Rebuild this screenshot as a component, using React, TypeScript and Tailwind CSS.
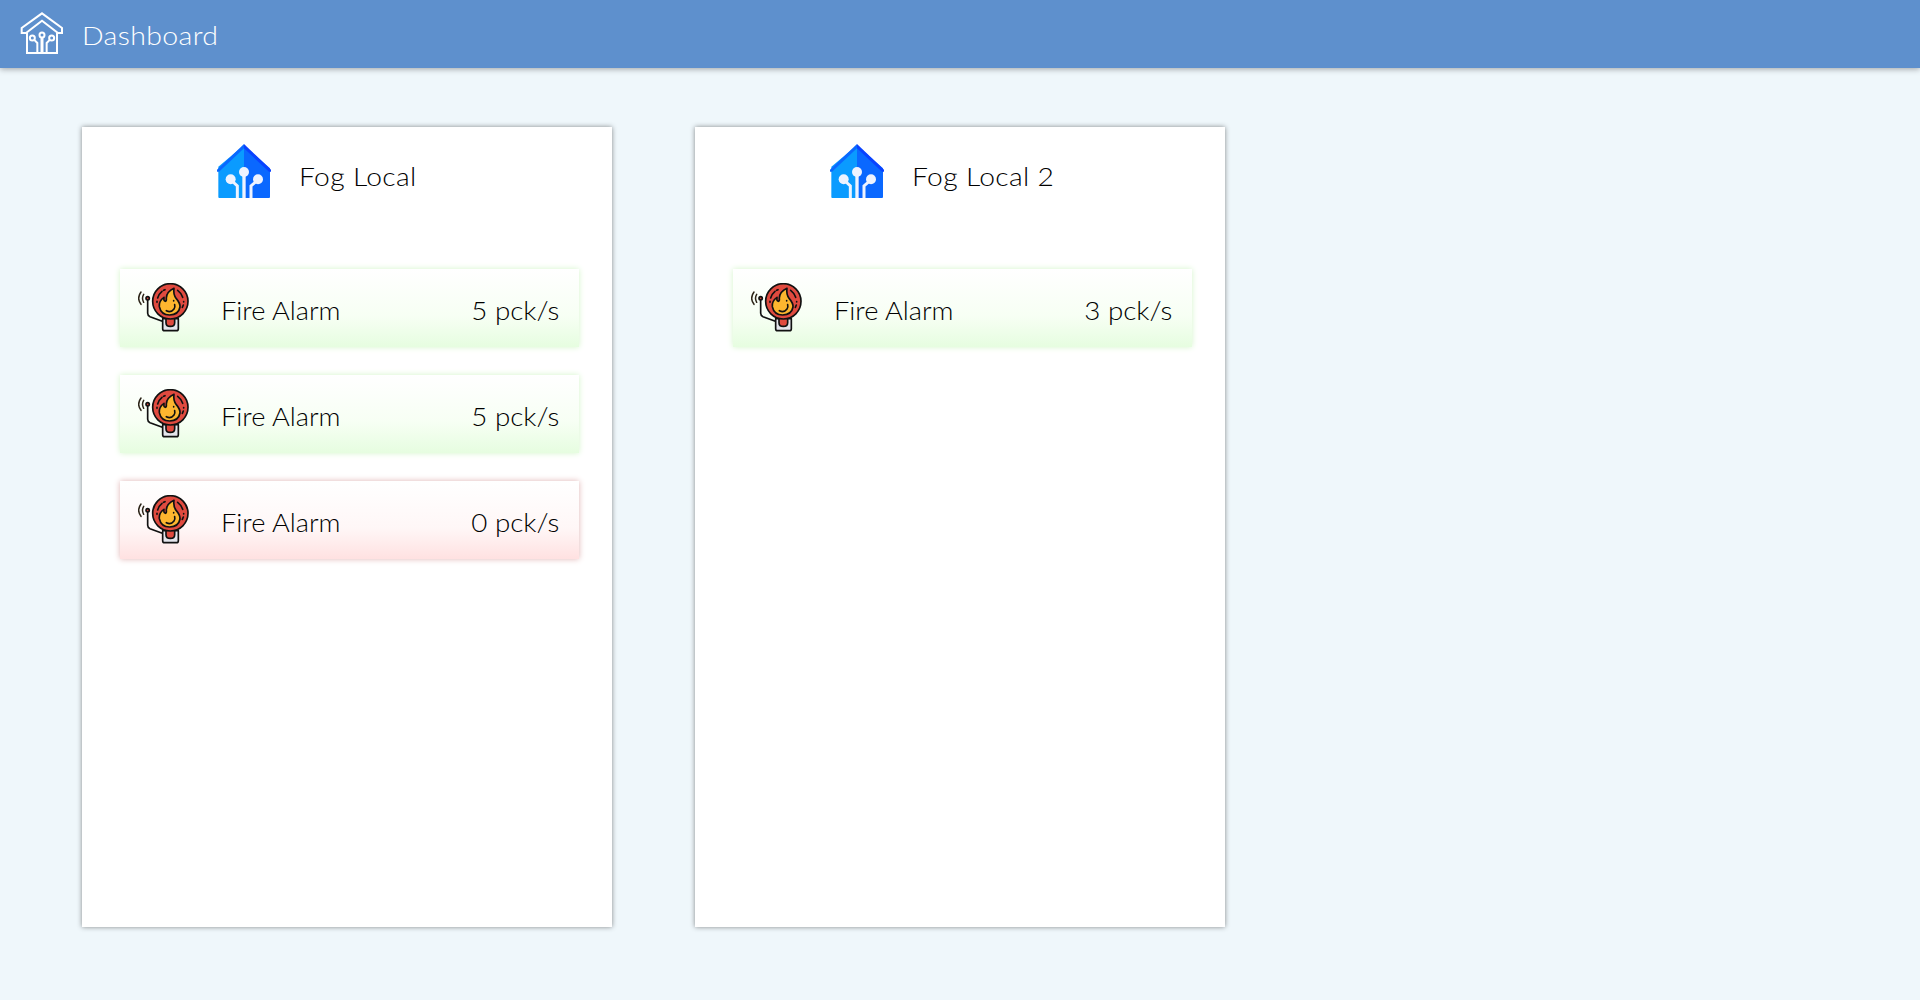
type Sensor = { name: string; rate: number };
type Fog = { name: string; sensors: Sensor[] };

const fogs: Fog[] = [
  {
    name: "Fog Local",
    sensors: [
      { name: "Fire Alarm", rate: 5 },
      { name: "Fire Alarm", rate: 5 },
      { name: "Fire Alarm", rate: 0 },
    ],
  },
  { name: "Fog Local 2", sensors: [{ name: "Fire Alarm", rate: 3 }] },
];

function HeaderLogo() {
  return (
    <svg className="h-[43px] w-[44px] shrink-0" viewBox="60 36 132 129" fill="none" stroke="white" strokeWidth="6">
      <path d="M126 40 L186 84 V99 H174 L126 62 L78 99 H65 V84 Z" />
      <path d="M81 98 V159 H171 V98" />
      <circle cx="97" cy="114" r="7.5" />
      <circle cx="126" cy="105" r="7.5" />
      <circle cx="155" cy="114" r="7.5" />
      <path d="M126 113 V158" strokeWidth="9" />
      <path d="M102 119 L112 129 V158 M150 119 L140 129 V158" />
    </svg>
  );
}

function HouseIcon() {
  return (
    <svg className="size-[54px] shrink-0" viewBox="51 42 162 162">
      <path d="M55 110 L132 46 V204 H58 Q55 204 55 201 Z" fill="#0a9bff" />
      <path d="M132 46 L210 115 V201 Q210 204 207 204 H132 Z" fill="#0a68ff" />
      <path d="M132 42 L51 119 V125 H57 L132 55 Z" fill="#0a68ff" />
      <path d="M132 42 L213 119 V125 H207 L132 55 Z" fill="#0a42ff" />
      <g fill="#eef3ff">
        <circle cx="92" cy="148" r="15" />
        <circle cx="132" cy="126" r="15" />
        <circle cx="174" cy="148" r="15" />
        <path d="M127 135 H137 V204 H127 Z" />
      </g>
      <path d="M96 153 L112 168 V204 M170 153 L153 168 V204" fill="none" stroke="#eef3ff" strokeWidth="9" />
    </svg>
  );
}

function AlarmIcon() {
  return (
    <svg
      className="h-[50px] w-[52px] shrink-0"
      viewBox="24 21 156 150"
      fill="none"
      stroke="#111"
      strokeWidth="5"
      strokeLinecap="round"
      strokeLinejoin="round"
    >
      <path d="M53 72 V112 Q53 119 60 122 L97 136" />
      <path d="M98 128 H145 V158 Q145 164 139 164 H104 Q98 164 98 158 Z" fill="#e4e5ec" />
      <path d="M108 126 H134 V140 Q134 151 121 151 Q108 151 108 140 Z" fill="#e04a3f" />
      <circle cx="121" cy="76" r="53" fill="#e04a3f" />
      <circle cx="53" cy="67" r="5" fill="#e04a3f" />
      <path d="M41 55 Q34 67 41 79 M33 48 Q19 67 33 85" stroke="#2c2418" strokeWidth="4.5" />
      <path
        d="M132 37 Q110 47 109 66 Q110 76 106 76 Q100 74 102 64 Q86 75 88 92 Q93 117 119 117 Q146 116 150 93 Q151 82 139 68 Q129 55 132 37 Z"
        fill="#fdb62f"
      />
      <path d="M109 104 Q123 111 132 99 Q136 94 134 86 M131 74 V75" />
      <path d="M83 66 Q87 53 96 46 M101 43 L105 41 M81 76 V79 M143 43 Q154 51 158 64 M161 77 V78 M160 87 L157 94" />
    </svg>
  );
}

function SensorRow({ name, rate }: Sensor) {
  const tone =
    rate > 0
      ? "via-[#f7fff4] to-[#e6fde0] shadow-[0_0_6px_#d3f5c9]"
      : "via-[#fff7f7] to-[#ffe1e1] shadow-[0_0_6px_#e0b4b4]";
  return (
    <div
      className={`flex h-[78px] items-start bg-linear-to-b from-white via-60% pt-3.5 pr-5 pl-[18px] ${tone}`}
    >
      <AlarmIcon />
      <span className="mt-[9px] ml-[31px] origin-left scale-x-[1.09] text-[25px] leading-9">{name}</span>
      <span className="mt-[9px] ml-auto origin-right scale-x-[1.11] text-[25px] leading-9">{rate} pck/s</span>
    </div>
  );
}

function FogCard({ name, sensors }: Fog) {
  return (
    <section className="h-[800px] w-[530px] bg-white shadow-[0_0_5px_rgba(0,0,0,0.45)]">
      <div className="flex h-[142px] items-start pt-[17px] pl-[135px]">
        <HouseIcon />
        <h2 className="mt-3.5 ml-7 origin-left scale-x-[1.13] text-[25px] leading-9 tracking-[0.3px]">{name}</h2>
      </div>
      <div className="flex flex-col gap-7 pr-[33px] pl-[38px]">
        {sensors.map((s, i) => (
          <SensorRow key={i} {...s} />
        ))}
      </div>
    </section>
  );
}

export default function App() {
  return (
    <div className="h-[1000px] overflow-hidden bg-[#eff7fb] font-['Century_Gothic','Lato',sans-serif] font-light text-black">
      <header className="flex h-[68px] items-start bg-[#5e90cd] pt-3 pl-5 text-white shadow-[0_1px_6px_rgba(0,0,0,0.35)]">
        <HeaderLogo />
        <h1 className="mt-[5px] ml-[18px] origin-left scale-x-[1.14] text-[25px] leading-9 tracking-[0.3px]">Dashboard</h1>
      </header>
      <main className="flex gap-[83px] pt-[59px] pl-[82px]">
        {fogs.map((f) => (
          <FogCard key={f.name} {...f} />
        ))}
      </main>
    </div>
  );
}
